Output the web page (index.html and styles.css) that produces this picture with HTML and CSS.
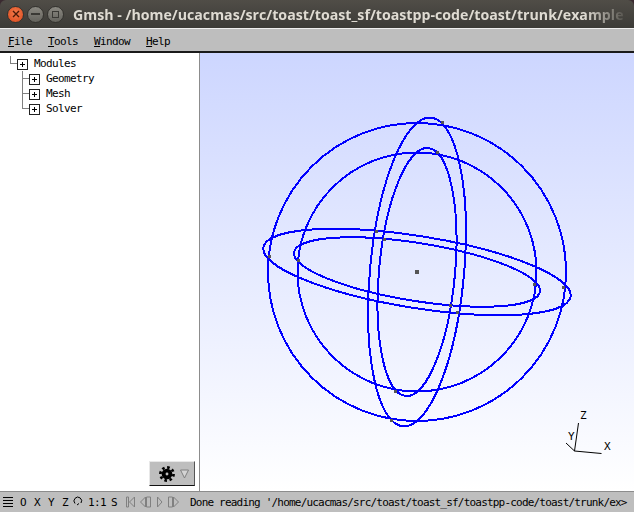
FILE: index.html
```html
<!DOCTYPE html>
<html lang="en">

<head>
    <meta charset="UTF-8">
    <title>Gmsh</title>
    <link rel="stylesheet" href="styles.css">
</head>

<body>

    <div class="titlebar">
        <div class="win-btn win-close">
            <svg width="8" height="8" viewBox="0 0 8 8"><path d="M1 1L7 7M7 1L1 7" stroke="#4a1a08" stroke-width="1.4"/></svg>
        </div>
        <div class="win-btn win-min"><span class="min-mark"></span></div>
        <div class="win-btn win-max"><span class="max-mark"></span></div>
        <div class="win-title">Gmsh - /home/ucacmas/src/toast/toast_sf/toastpp-code/toast/trunk/example</div>
    </div>

    <div class="menubar">
        <span class="menu-item"><u>F</u>ile</span>
        <span class="menu-item"><u>T</u>ools</span>
        <span class="menu-item"><u>W</u>indow</span>
        <span class="menu-item"><u>H</u>elp</span>
    </div>

    <div class="main">
        <div class="side-panel">
            <div class="tree">
                <div class="tree-row tree-root">
                    <span class="elbow"></span><span class="plus-box"></span><span class="tree-label">Modules</span>
                </div>
                <div class="tree-row tree-child">
                    <span class="elbow"></span><span class="plus-box"></span><span class="tree-label">Geometry</span>
                </div>
                <div class="tree-row tree-child">
                    <span class="elbow"></span><span class="plus-box"></span><span class="tree-label">Mesh</span>
                </div>
                <div class="tree-row tree-child">
                    <span class="elbow"></span><span class="plus-box"></span><span class="tree-label">Solver</span>
                </div>
            </div>
            <div class="gear-btn">
                <svg width="16" height="16" viewBox="0 0 18 18">
                    <circle cx="9" cy="9" r="7.4" fill="none" stroke="#000" stroke-width="3" stroke-dasharray="2.9 2.9"/>
                    <circle cx="9" cy="9" r="3.8" fill="none" stroke="#000" stroke-width="4.4"/>
                </svg>
                <svg class="gear-arrow" width="9" height="10" viewBox="0 0 9 10"><path d="M0.5 1H8.5L4.5 9Z" fill="#d4d4d4" stroke="#808080"/></svg>
            </div>
        </div>

        <div class="canvas">
            <svg class="scene" width="434" height="438" viewBox="200 53 434 438">
                <g class="curves">
                    <circle cx="417" cy="272" r="149"/>
                    <circle cx="417" cy="272" r="119.5"/>
                    <ellipse cx="417" cy="272" rx="47" ry="155" transform="rotate(5.2 417 272)"/>
                    <ellipse cx="417" cy="272" rx="38" ry="124.5" transform="rotate(5.2 417 272)"/>
                    <ellipse cx="417" cy="272" rx="155.5" ry="36" transform="rotate(9.1 417 272)"/>
                    <ellipse cx="417" cy="272" rx="124.5" ry="29" transform="rotate(9.1 417 272)"/>
                </g>
                <g class="points">
                    <rect x="415" y="270" width="4" height="4"/>
                    <rect x="441" y="121" width="3" height="3"/>
                    <rect x="436" y="151" width="3" height="3"/>
                    <rect x="375" y="230" width="3" height="3"/>
                    <rect x="383" y="238" width="3" height="3"/>
                    <rect x="268" y="255" width="3" height="3"/>
                    <rect x="297" y="259" width="3" height="3"/>
                    <rect x="533" y="283" width="3" height="3"/>
                    <rect x="562" y="286" width="3" height="3"/>
                    <rect x="449" y="304" width="3" height="3"/>
                    <rect x="456" y="311" width="3" height="3"/>
                    <rect x="394" y="390" width="3" height="3"/>
                    <rect x="390" y="419" width="3" height="3"/>
                </g>
                <path class="axes" d="M574.5 451L578.5 423M574.5 451L566 443M574.5 451L601.5 453.5"/>
                <text class="axis-label" x="580" y="419">Z</text>
                <text class="axis-label" x="568" y="440">Y</text>
                <text class="axis-label" x="604" y="450">X</text>
            </svg>
        </div>
    </div>

    <div class="statusbar">
        <span class="stat-btn stat-lines"><span></span><span></span><span></span><span></span></span>
        <span class="stat-btn">O</span>
        <span class="stat-btn">X</span>
        <span class="stat-btn">Y</span>
        <span class="stat-btn stat-z">Z</span>
        <svg class="stat-rot" width="10" height="10" viewBox="0 0 10 10"><path d="M4 9L6 7.5M2 7.5A3.8 3.8 0 1 1 8 7" fill="none" stroke="#000"/></svg>
        <span class="stat-ratio">1:1</span>
        <span class="stat-s">S</span>
        <svg class="stat-play" width="54" height="12" viewBox="0 0 54 12">
            <g fill="none" stroke="#808080">
                <path d="M0.5 1V11H2.5V1ZM8.5 1L3.5 6L8.5 11Z"/>
                <path d="M19.5 1L14.5 6L19.5 11ZM20.5 1V11H24.5V1Z"/>
                <path d="M31.5 1L36 6L31.5 11Z"/>
                <path d="M42.5 1V11H46.5V1ZM47.5 1L52.5 6L47.5 11Z"/>
            </g>
        </svg>
        <span class="stat-msg">Done reading '/home/ucacmas/src/toast/toast_sf/toastpp-code/toast/trunk/ex&gt;</span>
    </div>

</body>

</html>
```

FILE: styles.css
```css
html,
body {
    margin: 0;
    padding: 0;
    height: 100%;
    overflow: hidden;
}

body {
    width: 634px;
    height: 512px;
    display: flex;
    flex-direction: column;
    background-color: #3a2a30;
    font-family: 'DejaVu Sans Mono', monospace;
    font-size: 11px;
    letter-spacing: -0.62px;
    color: #000;
}

/* window title */
.titlebar {
    height: 28px;
    flex: none;
    display: flex;
    align-items: center;
    padding-left: 7px;
    box-sizing: border-box;
    border-radius: 6px 6px 0 0;
    background: linear-gradient(#504d47, #3c3b37);
}

.win-btn {
    width: 17px;
    height: 17px;
    margin-right: 3px;
    border-radius: 50%;
    display: flex;
    align-items: center;
    justify-content: center;
    box-sizing: border-box;
    border: 1px solid #33322e;
    background: linear-gradient(#8a8881, #64635d);
}

.win-close {
    background: radial-gradient(circle at 50% 40%, #f47b4b, #d9481c);
}

.min-mark {
    width: 9px;
    height: 2px;
    background-color: #3a3935;
}

.max-mark {
    width: 7px;
    height: 7px;
    box-sizing: border-box;
    border: 1px solid #3a3935;
}

.win-title {
    margin-left: 6px;
    width: 556px;
    white-space: nowrap;
    overflow: hidden;
    font-family: 'Open Sans', sans-serif;
    font-weight: 700;
    font-size: 14.2px;
    letter-spacing: 0;
    color: #dfdbd2;
    -webkit-mask-image: linear-gradient(to right, #000 92%, transparent);
    mask-image: linear-gradient(to right, #000 92%, transparent);
}

/* menu */
.menubar {
    height: 25px;
    flex: none;
    box-sizing: border-box;
    display: flex;
    align-items: center;
    gap: 16px;
    padding: 2px 0 0 8px;
    background-color: #bebebe;
    border-top: 1px solid #eee;
    border-bottom: 2px solid #1a1a1a;
}

/* panels */
.main {
    flex: 1;
    min-height: 0;
    display: flex;
}

.side-panel {
    width: 200px;
    flex: none;
    display: flex;
    flex-direction: column;
    box-sizing: border-box;
    background-color: #fff;
    border-right: 1px solid #8c8c8c;
}

.tree {
    flex: 1;
    padding-top: 3px;
}

.tree-row {
    height: 15px;
    display: flex;
}

.tree-root {
    padding-left: 10px;
}

.tree-child {
    padding-left: 22px;
    background: linear-gradient(#808080, #808080) 22px 0 / 1px 100% no-repeat;
}

.tree-child:last-child {
    background-size: 1px 8px;
}

.elbow {
    width: 7px;
    height: 8px;
    box-sizing: border-box;
    border-left: 1px solid #808080;
    border-bottom: 1px solid #808080;
}

.plus-box {
    width: 11px;
    height: 11px;
    margin-top: 3px;
    box-sizing: border-box;
    border: 1px solid #222;
    background:
        linear-gradient(#000, #000) center / 5px 1px no-repeat,
        linear-gradient(#000, #000) center / 1px 5px no-repeat,
        #fff;
}

.tree-label {
    margin-left: 6px;
    line-height: 15px;
}

.gear-btn {
    align-self: flex-end;
    width: 46px;
    height: 25px;
    margin: 0 4px 5px 0;
    padding-left: 9px;
    box-sizing: border-box;
    display: flex;
    align-items: center;
    background-color: #bebebe;
    border: 1px solid;
    border-color: #e8e8e8 #555 #111 #e8e8e8;
}

.gear-arrow {
    margin-left: 5px;
}

.canvas {
    flex: 1;
    background: linear-gradient(#cdd6ff, #fff);
}

.scene {
    display: block;
}

.curves {
    fill: none;
    stroke: #0000ff;
    stroke-width: 2;
    shape-rendering: crispEdges;
}

.points rect {
    fill: #555;
}

.axes {
    fill: none;
    stroke: #000;
    stroke-width: 1;
}

.axis-label {
    font-family: 'DejaVu Sans Mono', monospace;
    font-size: 11px;
}

/* bottom status line */
.statusbar {
    height: 21px;
    flex: none;
    box-sizing: border-box;
    display: flex;
    align-items: center;
    padding-left: 3px;
    background-color: #bebebe;
    border-top: 1px solid #8c8c8c;
    white-space: nowrap;
    overflow: hidden;
}

.stat-btn {
    flex: none;
    width: 14px;
}

.stat-lines {
    width: 17px;
    display: flex;
    flex-direction: column;
    gap: 2px;
}

.stat-lines span {
    width: 10px;
    height: 1px;
    background-color: #000;
}

.stat-z {
    width: 11px;
}

.stat-rot {
    flex: none;
    margin: 0 5px 2px 0;
}

.stat-ratio {
    flex: none;
    width: 23px;
}

.stat-s {
    flex: none;
    width: 15px;
}

.stat-play {
    flex: none;
}

.stat-msg {
    flex: none;
    margin-left: 10px;
    letter-spacing: -0.8px;
}
```
